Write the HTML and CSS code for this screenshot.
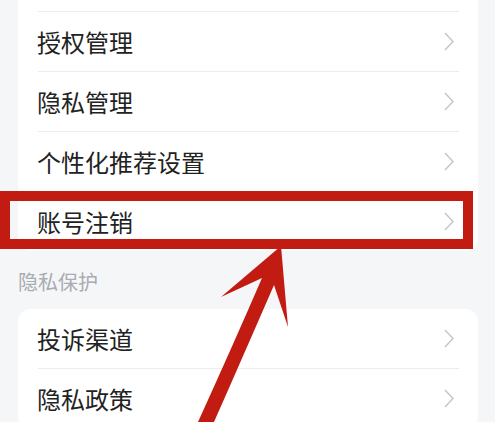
FILE: index.html
```html
<!DOCTYPE html>
<html lang="zh-CN">

<head>
    <meta charset="UTF-8">
    <meta name="viewport" content="width=device-width, initial-scale=1.0">
    <title>隐私设置</title>
    <link rel="stylesheet" href="styles.css">
</head>

<body>
    <div class="pagina">
        <!-- Primeiro grupo -->
        <div class="cartao cartao-topo">
            <div class="linha"><span>个人信息收集清单</span><svg class="seta" width="10" height="19" viewBox="0 0 10 19"><polyline points="1,1 9,9.5 1,18" /></svg></div>
            <div class="linha"><span>授权管理</span><svg class="seta" width="10" height="19" viewBox="0 0 10 19"><polyline points="1,1 9,9.5 1,18" /></svg></div>
            <div class="linha"><span>隐私管理</span><svg class="seta" width="10" height="19" viewBox="0 0 10 19"><polyline points="1,1 9,9.5 1,18" /></svg></div>
            <div class="linha"><span>个性化推荐设置</span><svg class="seta" width="10" height="19" viewBox="0 0 10 19"><polyline points="1,1 9,9.5 1,18" /></svg></div>
            <div class="linha"><span>账号注销</span><svg class="seta" width="10" height="19" viewBox="0 0 10 19"><polyline points="1,1 9,9.5 1,18" /></svg></div>
        </div>

        <p class="secao">隐私保护</p>

        <!-- Segundo grupo -->
        <div class="cartao">
            <div class="linha"><span>投诉渠道</span><svg class="seta" width="10" height="19" viewBox="0 0 10 19"><polyline points="1,1 9,9.5 1,18" /></svg></div>
            <div class="linha"><span>隐私政策</span><svg class="seta" width="10" height="19" viewBox="0 0 10 19"><polyline points="1,1 9,9.5 1,18" /></svg></div>
        </div>
    </div>

    <!-- Marcação em vermelho -->
    <div class="destaque"></div>
    <svg class="flecha" width="495" height="422" viewBox="0 0 495 422">
        <path d="M281,246 L221,297 L262,278 Q233,345 198,422 L214,422 Q248,345 274,285 L288,327 Z" fill="#c21b12" />
    </svg>
</body>

</html>
```

FILE: styles.css
```css
/* Configuração geral */
body {
    margin: 0;
    padding: 0;
    font-family: "Noto Sans CJK SC", "Noto Sans", sans-serif;
    background: #f5f6f8;
    color: #222;
    overflow: hidden;
    height: 422px;
}

.pagina {
    padding: 0 17px 0 18px;
}

.cartao {
    background-color: #fff;
    border-radius: 12px;
}

.cartao-topo {
    margin-top: -48px;
}

.linha {
    height: 59px;
    margin: 0 19px 0 20px;
    display: flex;
    justify-content: space-between;
    align-items: center;
    border-bottom: 1px solid #ececec;
    font-size: 24px;
    line-height: 1;
}

.linha span {
    margin-left: -1px;
}

.linha:last-child {
    border-bottom: none;
}

/* Seta da direita */
.seta {
    margin-right: 5px;
    fill: none;
    stroke: #c6c6c6;
    stroke-width: 1.5;
}

.secao {
    margin: 0;
    height: 58px;
    padding-top: 3px;
    box-sizing: border-box;
    display: flex;
    align-items: center;
    font-size: 20px;
    color: #a9acb1;
}

/* Marcação */
.destaque {
    position: absolute;
    left: 0;
    top: 191px;
    width: 453px;
    height: 38px;
    border: 10px solid #c21b12;
}

.flecha {
    position: absolute;
    left: 0;
    top: 0;
}
```
